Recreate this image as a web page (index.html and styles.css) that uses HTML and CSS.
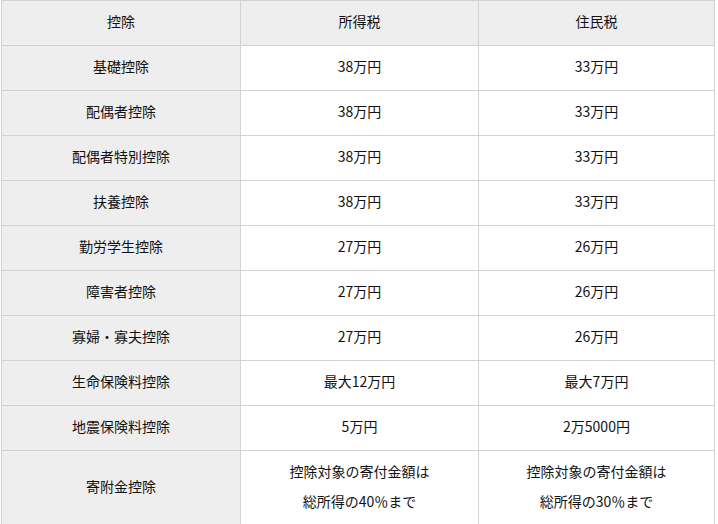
FILE: index.html
```html
<!DOCTYPE html>
<html lang="ja">
<head>
<meta charset="utf-8">
<link rel="stylesheet" href="styles.css">
</head>
<body>
<table class="tbl">
  <thead>
    <tr><th class="hd">控除</th><th class="hd">所得税</th><th class="hd">住民税</th></tr>
  </thead>
  <tbody>
    <tr><th>基礎控除</th><td>38万円</td><td>33万円</td></tr>
    <tr><th>配偶者控除</th><td>38万円</td><td>33万円</td></tr>
    <tr><th>配偶者特別控除</th><td>38万円</td><td>33万円</td></tr>
    <tr><th>扶養控除</th><td>38万円</td><td>33万円</td></tr>
    <tr><th>勤労学生控除</th><td>27万円</td><td>26万円</td></tr>
    <tr><th>障害者控除</th><td>27万円</td><td>26万円</td></tr>
    <tr><th>寡婦・寡夫控除</th><td>27万円</td><td>26万円</td></tr>
    <tr><th>生命保険料控除</th><td>最大12万円</td><td>最大7万円</td></tr>
    <tr><th>地震保険料控除</th><td>5万円</td><td>2万5000円</td></tr>
    <tr><th>寄附金控除</th><td>控除対象の寄付金額は<br>総所得の40％まで</td><td>控除対象の寄付金額は<br>総所得の30％まで</td></tr>
  </tbody>
</table>
</body>
</html>
```
FILE: styles.css
```css
html, body {
  margin: 0;
  padding: 0;
  background: #fff;
}
body {
  padding: 0 0 0 1px;
  font-family: "Noto Sans CJK JP", "Noto Sans", sans-serif;
  font-size: 14px;
  color: #111;
}
.tbl {
  border-collapse: collapse;
  width: 714px;
  table-layout: fixed;
}
.tbl th, .tbl td {
  border: 1px solid #d2d2d2;
  padding: 5px 8px 9px;
  line-height: 30px;
  text-align: center;
  font-weight: normal;
  vertical-align: middle;
}
.tbl th {
  background: #eeeeee;
}
.tbl th:first-child {
  width: 222px;
}
.tbl td:nth-child(2), .tbl .hd:nth-child(2) {
  width: 221px;
}
```
